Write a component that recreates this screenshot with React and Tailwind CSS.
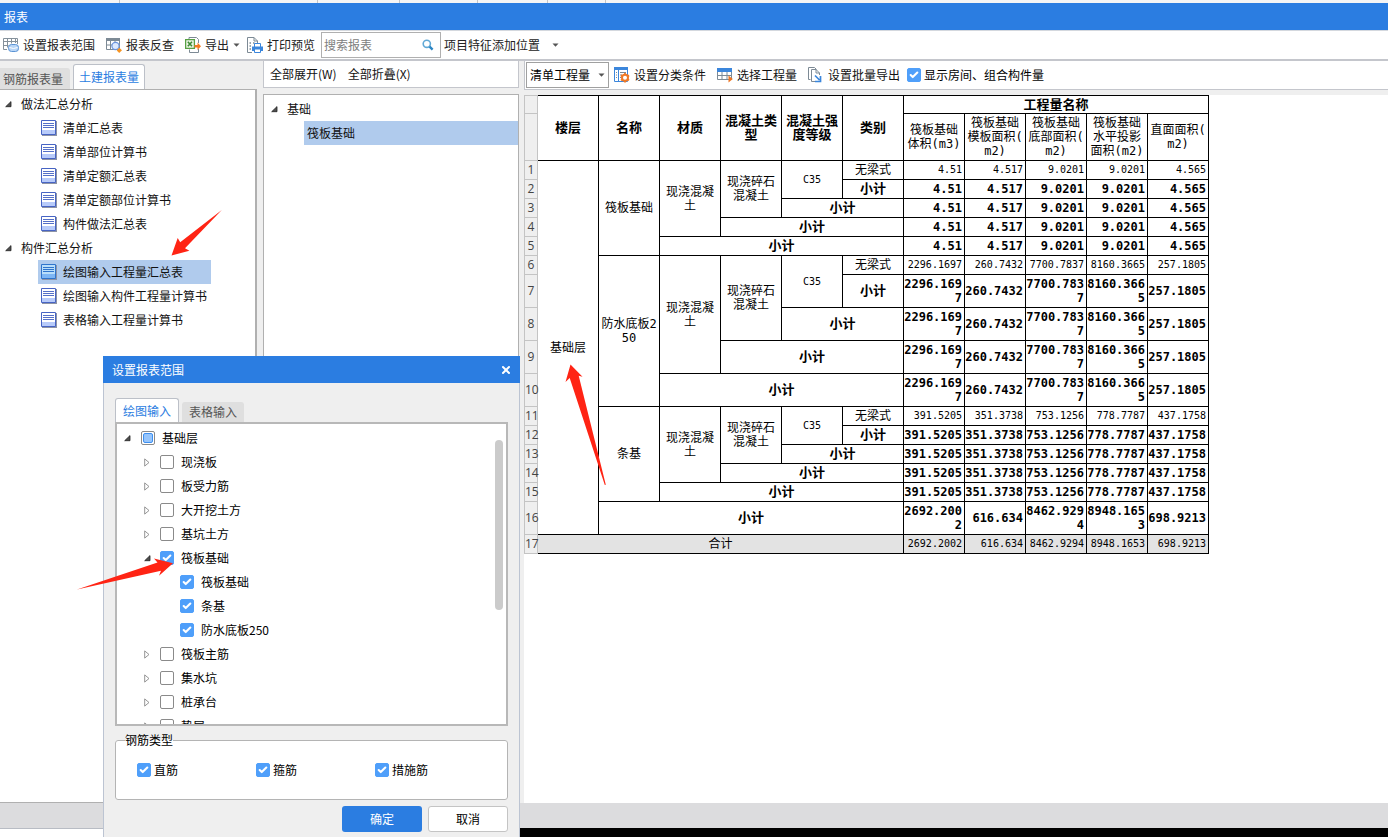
import { useState } from 'react'
import { Check, X } from 'lucide-react'
import clsx from 'clsx'

const summaryTree = [
  {
    title: '做法汇总分析',
    items: ['清单汇总表', '清单部位计算书', '清单定额汇总表', '清单定额部位计算书', '构件做法汇总表'],
  },
  {
    title: '构件汇总分析',
    items: ['绘图输入工程量汇总表', '绘图输入构件工程量计算书', '表格输入工程量计算书'],
  },
]

const rangeTree = [
  { id: 'floor', label: '基础层', level: 0, open: true, partial: true },
  { id: 'slab', label: '现浇板', level: 1 },
  { id: 'slab-bar', label: '板受力筋', level: 1 },
  { id: 'excavation', label: '大开挖土方', level: 1 },
  { id: 'pit', label: '基坑土方', level: 1 },
  { id: 'raft', label: '筏板基础', level: 1, open: true, checked: true },
  { id: 'raft-1', label: '筏板基础', level: 2, leaf: true, checked: true },
  { id: 'raft-2', label: '条基', level: 2, leaf: true, checked: true },
  { id: 'raft-3', label: '防水底板250', level: 2, leaf: true, checked: true },
  { id: 'raft-bar', label: '筏板主筋', level: 1 },
  { id: 'sump', label: '集水坑', level: 1 },
  { id: 'pile-cap', label: '桩承台', level: 1 },
  { id: 'cushion', label: '垫层', level: 1 },
]

const valueHeads = [
  ['筏板基础', '体积(m3)'],
  ['筏板基础', '模板面积(', 'm2)'],
  ['筏板基础', '底部面积(', 'm2)'],
  ['筏板基础', '水平投影', '面积(m2)'],
  ['直面面积(', 'm2)'],
]

const groups = [
  { name: '筏板基础', values: ['4.51', '4.517', '9.0201', '9.0201', '4.565'] },
  {
    name: '防水底板250',
    tall: true,
    values: ['2296.1697', '260.7432', '7700.7837', '8160.3665', '257.1805'],
  },
  { name: '条基', values: ['391.5205', '351.3738', '753.1256', '778.7787', '437.1758'] },
]

const totals = ['2692.2002', '616.634', '8462.9294', '8948.1653', '698.9213']

function Caret() {
  return (
    <svg width="7" height="4" viewBox="0 0 7 4" className="shrink-0">
      <path d="M0.5 0.5h6L3.5 3.8z" fill="#555" />
    </svg>
  )
}

function OpenArrow() {
  return (
    <svg width="7" height="7" viewBox="0 0 7 7" className="shrink-0">
      <path d="M6 0.6v5.1H0.7z" fill="#505050" stroke="#222" strokeWidth="0.8" />
    </svg>
  )
}

function ClosedArrow() {
  return (
    <svg width="6" height="9" viewBox="0 0 6 9" className="shrink-0">
      <path d="M0.7 0.9v7.2L5 4.5z" fill="#fff" stroke="#8a8a8a" strokeWidth="0.9" />
    </svg>
  )
}

function SearchIcon() {
  return (
    <svg width="12" height="12" viewBox="0 0 12 12" className="shrink-0">
      <circle cx="4.8" cy="4.8" r="3.6" fill="none" stroke="#62a9d6" strokeWidth="1.6" />
      <path d="M7.6 7.6l3 3" stroke="#2c86c4" strokeWidth="2.4" />
    </svg>
  )
}

function RangeIcon() {
  return (
    <svg width="16" height="16" viewBox="0 0 16 16" className="shrink-0">
      <path d="M0.5 1.5h14v11H0.5z" fill="#fff" />
      <path d="M0.5 12.5v-11h14V7M0.5 12.5H4M0.5 4.5h14M0.5 8.5h5M4.500 1.5v9M8.5 1.5v5M12.5 1.5V6" fill="none" stroke="#85919b" />
      <rect x="5.500" y="7.500" width="10" height="7" rx="3" fill="#b9d6f7" stroke="#5b93d4" />
      <path d="M6.500 10.500q4 2 8 0" fill="none" stroke="#fff" />
    </svg>
  )
}

function CheckBackIcon() {
  return (
    <svg width="16" height="16" viewBox="0 0 16 16" className="shrink-0">
      <path d="M0.5 1.5h13v11H0.5z" fill="#fff" stroke="#7d8a95" />
      <path d="M0 1h14v3H0z" fill="#7d8a95" />
      <path d="M0.5 8h13M4.5 2v10M9 2v10" stroke="#7d8a95" />
      <circle cx="9.5" cy="9" r="3.6" fill="#dce9ff" stroke="#6b94dd" strokeWidth="1.2" />
      <path d="M13.2 10.8l2.8 2.4-2.8 2.8-2.4-2.6z" fill="#f79421" />
    </svg>
  )
}

function ExportIcon() {
  return (
    <svg width="16" height="16" viewBox="0 0 16 16" className="shrink-0">
      <path d="M4 2.5V0.5h7.5l2 2V6M4.5 12.5v3h9V12" fill="#fff" stroke="#7d8a95" />
      <path d="M0.6 2.6h8.8v8.8H0.6z" fill="#eef6e6" stroke="#58a044" strokeWidth="1.3" />
      <path d="M2.8 4.8l4.200 4.500M7 4.800l-4.200 4.500" stroke="#3d8b35" strokeWidth="1.6" />
      <path d="M9.5 8h3V5.6L16 9.3 12.5 13v-2.400h-3z" fill="#f47a20" />
    </svg>
  )
}

function PrintIcon() {
  return (
    <svg width="16" height="16" viewBox="0 0 16 16" className="shrink-0">
      <path d="M5 15.5H0.5V0.5H7L10.5 4v2" fill="#fff" stroke="#7d8a95" />
      <path d="M7 0.5V4h3.5" fill="none" stroke="#7d8a95" />
      <path d="M2.5 6H4M2.5 9H4M2.5 12H4M6 6h1.5" stroke="#7d8a95" strokeWidth="1.5" />
      <path d="M7.5 6.5h6v4h-6z" fill="#fff" stroke="#3b86dc" />
      <path d="M5 9.5h11V14H5z" fill="#3b86dc" />
      <path d="M7.5 12h6v3.5h-6z" fill="#fff" stroke="#3b86dc" />
    </svg>
  )
}

function ClassifyIcon() {
  return (
    <svg width="16" height="16" viewBox="0 0 16 16" className="shrink-0">
      <path d="M0.5 0.5h13v14H0.5z" fill="#fff" stroke="#3b86dc" />
      <path d="M0 0h14v3H0z" fill="#3b86dc" />
      <path d="M4.5 3v11" stroke="#3b86dc" />
      <path d="M2 5.5h1M2 8h1M2 10.5h1M6 5.5h6M6 8h2M6 10.5h1" stroke="#7d8a95" />
      <circle cx="11" cy="10.8" r="3" fill="#fff" stroke="#f07a28" strokeWidth="2" />
      <path
        d="M11 6v2M11 13.600v2M6.900 8.400l1.700 1M13.400 12.200l1.700 1M6.900 13.200l1.700-1M13.400 9.400l1.700-1"
        stroke="#f07a28"
        strokeWidth="1.8"
      />
    </svg>
  )
}

function PickIcon() {
  return (
    <svg width="16" height="16" viewBox="0 0 16 16" className="shrink-0">
      <path d="M0.5 1.5h14v11H0.5z" fill="#fff" stroke="#7d8a95" />
      <path d="M0 1h15v4H0z" fill="#3b86dc" />
      <path d="M0.5 8.5h14M5 5v7.5M10 5v7.5" stroke="#7d8a95" />
      <path d="M11.5 8.5v7l4.300-3.500z" fill="#ee7623" />
    </svg>
  )
}

function BatchIcon() {
  return (
    <svg width="16" height="16" viewBox="0 0 16 16" className="shrink-0">
      <path d="M2.5 12.5h-2v-12h6l2 2" fill="none" stroke="#7d8a95" />
      <path d="M7 14.5H3.5v-12H8L11.5 6v2M8 2.5V6h3.5" fill="none" stroke="#7d8a95" />
      <path d="M7 8.5l4.500 4.500M12.5 9v5.5H7" fill="none" stroke="#3b86dc" strokeWidth="1.7" />
    </svg>
  )
}

function ReportIcon({ active }) {
  return (
    <svg width="16" height="16" viewBox="0 0 16 16" className="shrink-0">
      <path d="M1 1h15v15H1z" fill="#8d93a5" />
      <path d="M0.5 0.5h14v14H0.5z" fill={active ? '#b9defa' : '#fff'} stroke={active ? '#2f74cc' : '#4764c4'} />
      <path d="M1 10h13v4H1z" fill={active ? '#7db6f5' : '#b8cbfa'} />
      <path d="M2 3.5h11M2 5.5h11M2 7.500h11" stroke={active ? '#2f74cc' : '#5570c8'} />
    </svg>
  )
}

function ToolButton({ icon, children, caret, className }) {
  return (
    <button type="button" className={clsx('flex h-6 shrink-0 items-center gap-1 whitespace-nowrap pl-[3px]', className)}>
      {icon}
      <span>{children}</span>
      {caret && <Caret />}
    </button>
  )
}

function CheckBox({ label, defaultChecked, partial, className }) {
  const [checked, setChecked] = useState(Boolean(defaultChecked))
  return (
    <label className={clsx('flex items-center whitespace-nowrap', className)}>
      <span className="relative block size-[14px] shrink-0">
        <input
          type="checkbox"
          checked={checked}
          onChange={(e) => setChecked(e.target.checked)}
          className="block size-[14px] appearance-none rounded-[2px] border border-[#8a8a8a] bg-white checked:border-[#4f9ffa] checked:bg-[#4f9ffa]"
        />
        {checked && (
          <Check className="pointer-events-none absolute inset-[2px] text-white" size={10} strokeWidth={5} />
        )}
        {partial && !checked && (
          <span className="pointer-events-none absolute inset-[2px] rounded-[2px] border border-[#3d8ff0] bg-[#97c5fb]" />
        )}
      </span>
      <span>{label}</span>
    </label>
  )
}

function SummaryPanel() {
  const [selected, setSelected] = useState('绘图输入工程量汇总表')
  return (
    <aside className="flex w-[257px] shrink-0 flex-col pt-[3px]">
      <div className="flex h-[25px] items-end gap-[3px]">
        <button type="button" className="h-[21px] w-[70px] rounded-tr-[3px] bg-[#dfdfdf] pl-[3px] text-left text-[#555]">
          钢筋报表量
        </button>
        <button
          type="button"
          className="h-[25px] w-[72px] rounded-t-[3px] border border-b-0 border-[#bcc0c8] bg-white text-[#2b7de1]"
        >
          土建报表量
        </button>
      </div>
      <div className="flex-1 border-y border-r-2 border-[#b0b0b0] bg-white pt-[2px]">
        {summaryTree.map((group) => (
          <div key={group.title}>
            <div className="flex h-6 items-center gap-[9px] pl-[5px]">
              <OpenArrow />
              {group.title}
            </div>
            <ul className="ml-[38px] w-fit">
              {group.items.map((item) => (
                <li key={item}>
                  <button
                    type="button"
                    onClick={() => setSelected(item)}
                    className={clsx(
                      'flex h-6 w-full items-center gap-[6px] pl-[3px] pr-1',
                      selected === item && 'bg-[#b0cbed]'
                    )}
                  >
                    <ReportIcon active={selected === item} />
                    {item}
                  </button>
                </li>
              ))}
            </ul>
          </div>
        ))}
      </div>
    </aside>
  )
}

function ComponentPanel() {
  return (
    <section className="flex w-[256px] shrink-0 flex-col gap-[6px]">
      <div className="flex h-[27px] items-center gap-[11px] border border-t-0 border-[#c4c6cc] bg-white pl-[6px]">
        <button type="button">全部展开(W)</button>
        <button type="button">全部折叠(X)</button>
      </div>
      <div className="flex-1 border border-[#b0b0b0] bg-white pt-[2px]">
        <div className="flex h-6 items-center gap-[9px] pl-[7px]">
          <OpenArrow />
          基础
        </div>
        <button type="button" className="ml-10 block h-6 w-[214px] bg-[#b0cbed] pl-[3px] text-left">
          筏板基础
        </button>
      </div>
    </section>
  )
}

function RowNo({ children, className }) {
  return (
    <th
      className={clsx(
        "border-x border-b border-[#c4c4c4] bg-[#efefef] p-0 text-center font-['Open_Sans',sans-serif] text-xs font-normal text-[#444]",
        className
      )}
    >
      {children}
    </th>
  )
}

function Cell({ bold, small, className, children, ...rest }) {
  return (
    <td
      className={clsx(
        'break-all border-b border-r border-black py-0 text-center leading-[14px]',
        bold ? 'text-[13px] font-bold' : small ? 'text-[10px]' : 'text-xs',
        className || 'px-0'
      )}
      {...rest}
    >
      {children}
    </td>
  )
}

function Values({ values, bold }) {
  return values.map((value, i) => (
    <td
      key={i}
      className={clsx(
        'break-all border-b border-r border-black p-0 pr-[2px] text-right leading-[14px]',
        bold ? 'text-xs font-bold' : 'text-[10px]'
      )}
    >
      {value}
    </td>
  ))
}

function GroupRows({ group, start, first }) {
  const height = group.tall ? 'h-[33px]' : 'h-[19px]'
  return (
    <>
      <tr className="h-[19px]">
        <RowNo>{start}</RowNo>
        {first && <Cell rowSpan={16}>基础层</Cell>}
        <Cell rowSpan={5}>{group.name}</Cell>
        <Cell rowSpan={4} className="px-1">现浇混凝土</Cell>
        <Cell rowSpan={3} className="px-1">现浇碎石混凝土</Cell>
        <Cell rowSpan={2} small>C35</Cell>
        <Cell>无梁式</Cell>
        <Values values={group.values} />
      </tr>
      {[1, 2, 3, 4].map((span) => (
        <tr key={span} className={height}>
          <RowNo>{start + span}</RowNo>
          <Cell bold colSpan={span}>小计</Cell>
          <Values values={group.values} bold />
        </tr>
      ))}
    </>
  )
}

function QuantityTable() {
  return (
    <table className="w-[685px] table-fixed border-separate border-spacing-0 font-['DejaVu_Sans_Mono','Noto_Sans_CJK_SC',monospace] text-black">
      <colgroup>
        <col className="w-[14px]" />
        {Array.from({ length: 11 }, (_, i) => (
          <col key={i} className="w-[61px]" />
        ))}
      </colgroup>
      <thead className="text-[13px] leading-[14px]">
        <tr className="h-[19px]">
          <RowNo className="border-t" />
          {['楼层', '名称', '材质', '混凝土类型', '混凝土强度等级', '类别'].map((head) => (
            <th key={head} rowSpan={2} className="break-all border-b border-r border-t border-black p-0">
              {head}
            </th>
          ))}
          <th colSpan={5} className="border-b border-r border-t border-black p-0">工程量名称</th>
        </tr>
        <tr className="h-[47px]">
          <RowNo />
          {valueHeads.map((lines) => (
            <th key={lines.join('')} className="border-b border-r border-black p-0 text-xs leading-[14px] font-normal whitespace-nowrap">
              {lines.map((line) => (
                <span key={line} className="block">{line}</span>
              ))}
            </th>
          ))}
        </tr>
      </thead>
      <tbody>
        {groups.map((group, i) => (
          <GroupRows key={group.name} group={group} start={i * 5 + 1} first={i === 0} />
        ))}
        <tr className="h-[33px]">
          <RowNo>16</RowNo>
          <Cell bold colSpan={5}>小计</Cell>
          <Values values={totals} bold />
        </tr>
        <tr className="h-[19px] bg-[#e3e3e3]">
          <RowNo>17</RowNo>
          <Cell colSpan={6}>合计</Cell>
          <Values values={totals} />
        </tr>
      </tbody>
    </table>
  )
}

function ReportView() {
  return (
    <main className="flex min-w-0 flex-1 flex-col gap-[5px]">
      <div className="flex h-[29px] items-center border-b border-l border-[#c4c6cc] bg-white pl-px">
        <div className="relative mr-[2px]">
          <select
            aria-label="工程量类型"
            className="block h-[26px] w-[83px] appearance-none rounded-none border border-[#a0a0a0] bg-white pl-[3px] text-black"
          >
            <option>清单工程量</option>
            <option>定额工程量</option>
          </select>
          <span className="pointer-events-none absolute right-1 top-[11px]">
            <Caret />
          </span>
        </div>
        <ToolButton icon={<ClassifyIcon />} className="pr-2">设置分类条件</ToolButton>
        <ToolButton icon={<PickIcon />} className="pr-2">选择工程量</ToolButton>
        <ToolButton icon={<BatchIcon />} className="pr-[7px]">设置批量导出</ToolButton>
        <CheckBox label="显示房间、组合构件量" defaultChecked className="gap-[3px] text-black" />
      </div>
      <div className="flex-1 overflow-hidden bg-white">
        <QuantityTable />
      </div>
    </main>
  )
}

const indents = ['pl-1', 'pl-6', 'pl-11']

function RangeDialog() {
  return (
    <div
      role="dialog"
      aria-label="设置报表范围"
      className="absolute bottom-0 left-[103px] top-[356px] flex w-[417px] flex-col border-x border-[#bcc4d2] bg-[#efefef] text-black"
    >
      <div className="-mx-px flex h-[27px] shrink-0 items-center justify-between bg-[#2b7de1] pl-[9px] pr-2 text-white">
        <span>设置报表范围</span>
        <button type="button" aria-label="关闭">
          <X size={12} strokeWidth={4} />
        </button>
      </div>
      <div className="flex flex-1 flex-col px-[11px] pt-[15px]">
        <div className="flex h-6 items-end gap-[3px]">
          <button type="button" className="h-6 w-16 rounded-t-[3px] border border-b-0 border-[#bcc0c8] bg-white text-[#2b7de1]">
            绘图输入
          </button>
          <button type="button" className="h-5 w-[62px] rounded-t-[3px] bg-[#dfdfdf] text-[#555]">
            表格输入
          </button>
        </div>
        <div className="relative h-[304px] shrink-0 overflow-hidden border-2 border-[#b8b8b8] bg-white pt-[2px]">
          <ul>
            {rangeTree.map((node) => (
              <li
                key={node.id}
                className={clsx('flex h-6 items-center', indents[node.level], node.level > 0 && '-ml-px last:-mb-2')}
              >
                <span className={clsx('flex w-5 shrink-0', node.level === 0 ? 'pl-[3px]' : 'pl-1')}>
                  {!node.leaf && (node.open ? <OpenArrow /> : <ClosedArrow />)}
                </span>
                <CheckBox label={node.label} defaultChecked={node.checked} partial={node.partial} className="gap-[7px]" />
              </li>
            ))}
          </ul>
          <div className="absolute right-[3px] top-4 h-[170px] w-2 rounded-full bg-[#cbcbcb]" />
        </div>
        <fieldset className="mt-[6px] h-[68px] shrink-0 rounded-[3px] border border-[#b4b4b4] bg-white pl-[21px]">
          <legend className="-ml-3 h-4 leading-4">钢筋类型</legend>
          <div className="flex pt-[14px]">
            <CheckBox label="直筋" defaultChecked className="w-[119px] gap-[3px]" />
            <CheckBox label="箍筋" defaultChecked className="w-[119px] gap-[3px]" />
            <CheckBox label="措施筋" defaultChecked className="gap-[3px]" />
          </div>
        </fieldset>
        <div className="mt-[6px] flex justify-end gap-[6px]">
          <button type="button" className="h-[26px] w-20 rounded-[3px] bg-[#2b7de1] text-white">确定</button>
          <button type="button" className="h-[26px] w-20 rounded-[3px] border border-[#c4c4c4] bg-white">取消</button>
        </div>
      </div>
    </div>
  )
}

// red pointer marks over the window
function Arrows() {
  return (
    <svg width="620" height="600" viewBox="0 0 620 600" className="pointer-events-none absolute left-0 top-0" fill="#ff2414">
      <path d="M171.500 255.500L177.700 238l2.500 4.300L221.800 210 185 248.300l4.400 2.400z" />
      <path d="M173 563.300L154 558.500l3.500 4L77 589.500 161 570.700l-2 5z" />
      <path d="M570.500 364.500L565.500 382l4.200-4L604.800 485l1-.300L578.700 375.700l3.800 1z" />
    </svg>
  )
}

export default function App() {
  return (
    <div className="relative flex h-screen min-h-[837px] flex-col overflow-hidden bg-[#efefef] font-['Noto_Sans_CJK_SC',sans-serif] text-xs leading-4 text-[#111]">
      <div className="flex h-[3px] shrink-0 bg-[#f5f5f5]">
        <span className="w-[120px] border-r border-[#c4c4c4]" />
        <span className="w-[198px] border-r border-[#c4c4c4]" />
        <span className="w-[82px] border-r border-[#c4c4c4]" />
        <span className="w-[78px] border-r border-[#c4c4c4]" />
        <span className="w-[70px] border-r border-[#c4c4c4]" />
        <span className="w-[58px] border-r border-[#c4c4c4]" />
      </div>
      <header className="flex h-[27px] shrink-0 items-center bg-[#2b7de1] pl-1 text-white">报表</header>
      <div className="flex h-[31px] shrink-0 items-center border-b-2 border-t border-b-[#c4c6cc] border-t-[#d4d8de] bg-white text-[#222]">
        <ToolButton icon={<RangeIcon />} className="pr-2">设置报表范围</ToolButton>
        <ToolButton icon={<CheckBackIcon />} className="pr-2">报表反查</ToolButton>
        <ToolButton icon={<ExportIcon />} caret className="pr-1">导出</ToolButton>
        <ToolButton icon={<PrintIcon />} className="pr-[6px]">打印预览</ToolButton>
        <label className="flex h-[26px] w-[120px] items-center border border-[#b0b0b0] bg-white pl-[2px] pr-[6px]">
          <input type="text" aria-label="搜索报表" placeholder="搜索报表" className="min-w-0 flex-1 outline-none placeholder:text-[#808080]" />
          <SearchIcon />
        </label>
        <button type="button" className="flex items-center gap-3 whitespace-nowrap pl-[3px]">
          项目特征添加位置
          <Caret />
        </button>
      </div>
      <div className="flex min-h-0 flex-1">
        <SummaryPanel />
        <div className="w-[6px] shrink-0" />
        <ComponentPanel />
        <div className="w-[5px] shrink-0" />
        <ReportView />
      </div>
      <div className="h-[25px] shrink-0 bg-[#dcdcde]" />
      <div className="flex h-[9px] shrink-0">
        <div className="w-[520px] border-t border-[#b8bcc4] bg-white" />
        <div className="flex-1 bg-black" />
      </div>
      <RangeDialog />
      <Arrows />
    </div>
  )
}
